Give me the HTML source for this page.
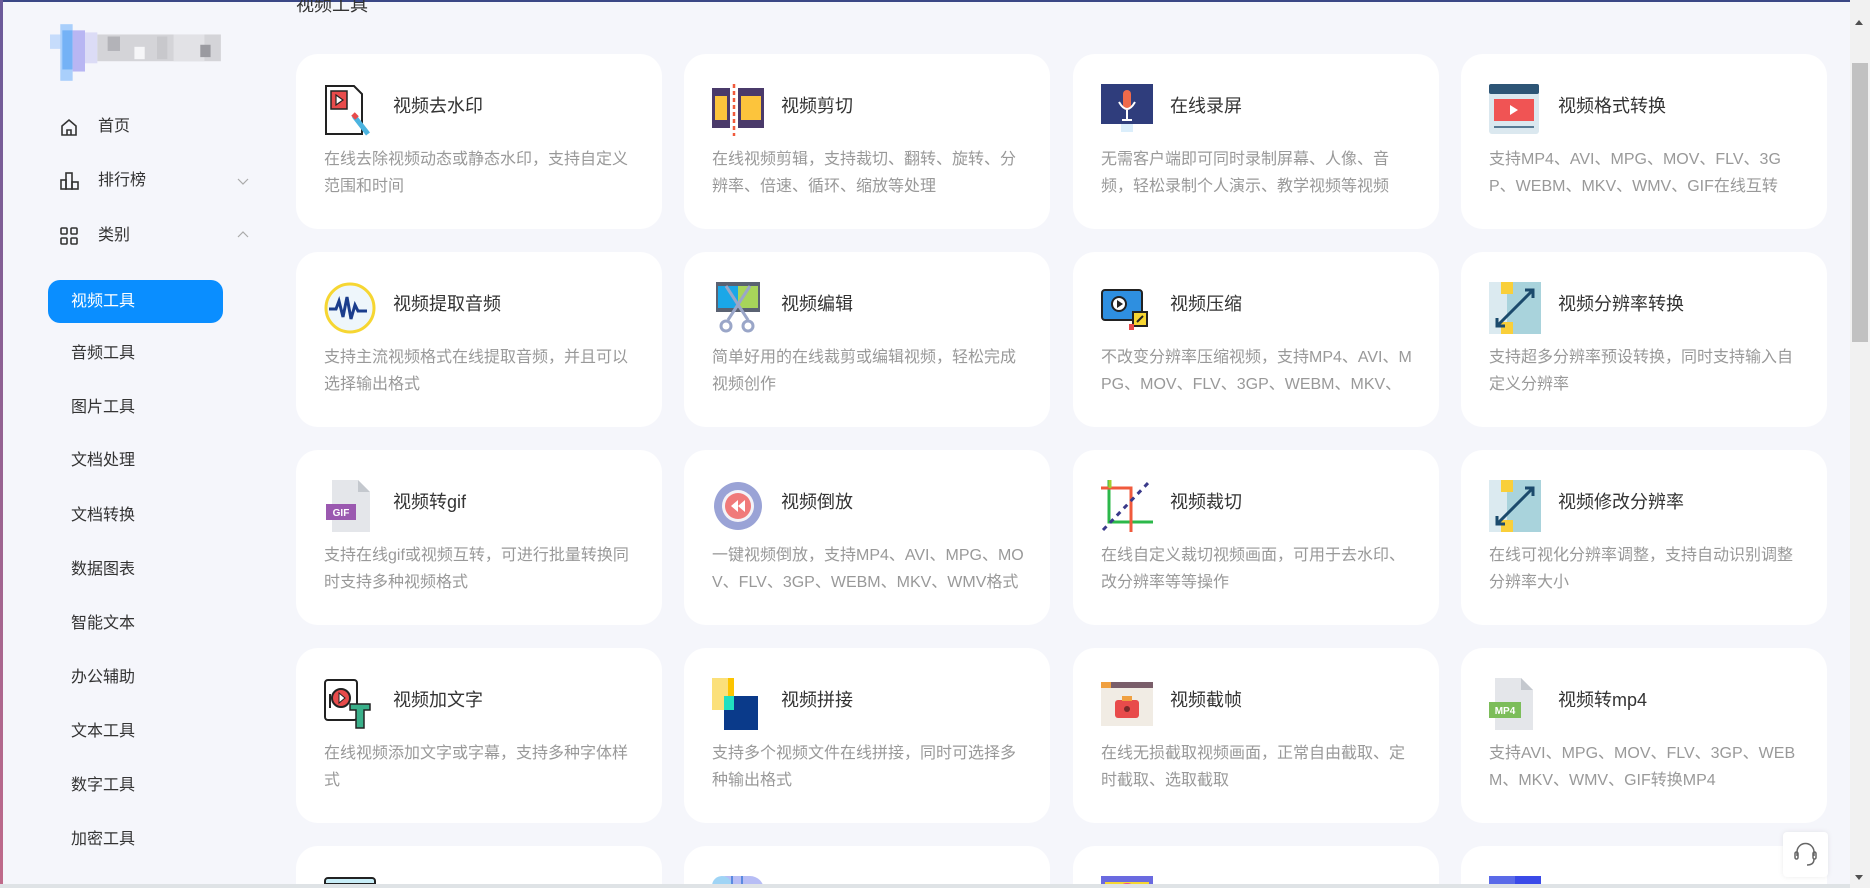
<!DOCTYPE html>
<html><head><meta charset="utf-8"><style>
*{margin:0;padding:0;box-sizing:border-box}
html,body{width:1870px;height:888px;overflow:hidden}
body{background:#f5f6fb;font-family:"Liberation Sans","Noto Sans CJK SC",sans-serif}
#wrap{position:relative;width:1870px;height:888px;overflow:hidden;background:#f5f6fb}
.topb{position:absolute;left:0;top:0;width:1870px;height:2px;background:#3b4886}
.leftb{position:absolute;left:0;top:0;width:3px;height:888px;background:linear-gradient(#6a5a9a,#c06a8a)}
.logo{position:absolute;left:50px;top:22px;width:175px;height:62px}
.nav{position:absolute;left:98px;font-size:16px;color:#333;line-height:20px}
.sub{position:absolute;left:71px;font-size:16px;color:#333;line-height:20px}
.ico{position:absolute;left:60px}
.chev{position:absolute;left:237px;width:12px;height:12px}
.pill{position:absolute;left:48px;top:280px;width:175px;height:43px;background:#0a8eff;border-radius:12px;color:#fff;font-size:16px;line-height:43px;padding-left:23px}
h2{position:absolute;left:296px;top:0;height:16px;overflow:hidden;font-size:18px;font-weight:normal;color:#333;line-height:10px}
.card{position:absolute;width:366px;height:175px;background:#fff;border-radius:22px;overflow:hidden}
.card.last{height:42px;border-radius:22px 22px 0 0}
.card svg{position:absolute;left:28px;top:30px;width:52px;height:52px}
.card .t{position:absolute;left:97px;top:40px;font-size:18px;color:#333;line-height:24px;white-space:nowrap}
.card .d{position:absolute;left:28px;top:92px;width:312px;font-size:16px;color:#999;line-height:27px;word-break:break-all}
.sb{position:absolute;left:1850px;top:0;width:20px;height:888px;background:#f1f1f1}
.thumb{position:absolute;left:1852px;top:63px;width:16px;height:279px;background:#c1c1c1}
.help{position:absolute;left:1783px;top:832px;width:45px;height:45px;background:#fff;border-radius:4px;box-shadow:0 0 6px rgba(0,0,0,.08)}
.hbar{position:absolute;left:0;top:884px;width:1850px;height:4px;background:#dfe3e6}
</style></head><body><div id="wrap">
<div class="topb"></div><div class="leftb"></div>
<svg class="logo" viewBox="0 0 170 60">
<rect x="0" y="12" width="12" height="14" fill="#c6dcfb"/><rect x="10" y="2" width="12" height="55" fill="#a9cffb"/><rect x="12" y="8" width="10" height="38" fill="#74b2f6"/><rect x="22" y="8" width="12" height="40" fill="#b8b6f3"/><rect x="34" y="10" width="12" height="30" fill="#dcdcf6"/>
<rect x="46" y="12" width="120" height="26" fill="#d4d4d8"/><rect x="56" y="14" width="12" height="14" fill="#b3b3b8"/><rect x="82" y="24" width="10" height="12" fill="#f6f6f8"/><rect x="104" y="14" width="10" height="22" fill="#c8c8cc"/><rect x="120" y="12" width="30" height="26" fill="#e2e2e6"/><rect x="146" y="22" width="10" height="12" fill="#9a9aa0"/>
</svg>
<svg class="ico" style="top:118px" width="18" height="18" viewBox="0 0 18 18" fill="none" stroke="#333" stroke-width="1.6"><path d="M2 8L9 2l7 6v9H2z"/><path d="M7 17v-5h4v5"/></svg>
<div class="nav" style="top:117px">首页</div>
<svg class="ico" style="top:172px" width="20" height="18" viewBox="0 0 20 18" fill="none" stroke="#333" stroke-width="1.6"><rect x="1" y="8" width="5" height="9"/><rect x="6" y="1" width="6" height="16"/><rect x="12" y="10" width="6" height="7"/></svg>
<div class="nav" style="top:171px">排行榜</div>
<svg class="chev" style="top:175px" viewBox="0 0 12 12" fill="none" stroke="#aaa" stroke-width="1.2"><path d="M1 4l5 5 5-5"/></svg>
<svg class="ico" style="top:227px" width="18" height="18" viewBox="0 0 18 18" fill="none" stroke="#333" stroke-width="1.6"><rect x="1" y="1" width="6" height="6" rx="1"/><rect x="11" y="1" width="6" height="6" rx="1"/><rect x="1" y="11" width="6" height="6" rx="1"/><rect x="11" y="11" width="6" height="6" rx="1"/></svg>
<div class="nav" style="top:226px">类别</div>
<svg class="chev" style="top:229px" viewBox="0 0 12 12" fill="none" stroke="#aaa" stroke-width="1.2"><path d="M1 8l5-5 5 5"/></svg>
<div class="pill">视频工具</div>
<div class="sub" style="top:344px">音频工具</div>
<div class="sub" style="top:398px">图片工具</div>
<div class="sub" style="top:451px">文档处理</div>
<div class="sub" style="top:506px">文档转换</div>
<div class="sub" style="top:560px">数据图表</div>
<div class="sub" style="top:614px">智能文本</div>
<div class="sub" style="top:668px">办公辅助</div>
<div class="sub" style="top:722px">文本工具</div>
<div class="sub" style="top:776px">数字工具</div>
<div class="sub" style="top:830px">加密工具</div>

<h2>视频工具</h2>

<div class="card" style="left:296px;top:54px"><svg viewBox="0 0 52 52"><path d="M2 2h28l8 8v40H2z" fill="#fff" stroke="#222" stroke-width="2"/><rect x="7" y="7" width="16" height="18" fill="#e84b4b" stroke="#222" stroke-width="1.5"/><path d="M12 11l7 5-7 5z" fill="#fff" stroke="#222" stroke-width="1.2"/><path d="M30 32l14 18" stroke="#4bb4e0" stroke-width="5"/><path d="M29 30l4 4" stroke="#e84b4b" stroke-width="5"/></svg><div class="t">视频去水印</div><div class="d">在线去除视频动态或静态水印，支持自定义范围和时间</div></div>
<div class="card" style="left:684px;top:54px"><svg viewBox="0 0 52 52"><rect x="0" y="4" width="18" height="40" fill="#4a3a6a"/><rect x="3" y="12" width="12" height="24" fill="#fcc43c"/><rect x="26" y="4" width="26" height="40" fill="#4a3a6a"/><rect x="29" y="12" width="20" height="24" fill="#fcc43c"/><path d="M22 0v52" stroke="#f05a3c" stroke-width="2.5" stroke-dasharray="4 3"/></svg><div class="t">视频剪切</div><div class="d">在线视频剪辑，支持裁切、翻转、旋转、分辨率、倍速、循环、缩放等处理</div></div>
<div class="card" style="left:1073px;top:54px"><svg viewBox="0 0 52 52"><rect x="0" y="0" width="52" height="40" fill="#2f3d7c"/><rect x="22" y="6" width="8" height="20" rx="4" fill="#f06a4a"/><path d="M18 18q8 14 16 0M26 26v10M21 36h10" stroke="#fff" stroke-width="2" fill="none"/><rect x="20" y="40" width="12" height="8" fill="#dbeefb"/></svg><div class="t">在线录屏</div><div class="d">无需客户端即可同时录制屏幕、人像、音频，轻松录制个人演示、教学视频等视频</div></div>
<div class="card" style="left:1461px;top:54px"><svg viewBox="0 0 52 52"><rect x="0" y="0" width="50" height="50" rx="3" fill="#dbe8ef"/><rect x="0" y="0" width="50" height="10" rx="2" fill="#2d5576"/><rect x="5" y="15" width="40" height="22" fill="#f05454"/><path d="M21 21l8 5-8 5z" fill="#fff"/><path d="M5 43h40" stroke="#2d5576" stroke-width="1.5"/></svg><div class="t">视频格式转换</div><div class="d">支持MP4、AVI、MPG、MOV、FLV、3GP、WEBM、MKV、WMV、GIF在线互转</div></div>

<div class="card" style="left:296px;top:252px"><svg viewBox="0 0 52 52"><circle cx="26" cy="26" r="24" fill="#eef6fb" stroke="#f6d632" stroke-width="3"/><path d="M5 27h7l3-8 4 16 4-20 4 22 4-14 3 6h9" stroke="#1b3d8c" stroke-width="3" fill="none"/></svg><div class="t">视频提取音频</div><div class="d">支持主流视频格式在线提取音频，并且可以选择输出格式</div></div>
<div class="card" style="left:684px;top:252px"><svg viewBox="0 0 52 52"><rect x="4" y="0" width="44" height="30" fill="#5a6272"/><rect x="6" y="4" width="20" height="22" fill="#1aa7e8"/><rect x="26" y="4" width="20" height="22" fill="#a7d45a"/><path d="M14 4l22 34M38 4L16 38" stroke="#9aa6c8" stroke-width="3"/><circle cx="14" cy="44" r="5" fill="none" stroke="#9aa6c8" stroke-width="3"/><circle cx="36" cy="44" r="5" fill="none" stroke="#9aa6c8" stroke-width="3"/></svg><div class="t">视频编辑</div><div class="d">简单好用的在线裁剪或编辑视频，轻松完成视频创作</div></div>
<div class="card" style="left:1073px;top:252px"><svg viewBox="0 0 52 52"><rect x="1" y="8" width="40" height="30" rx="3" fill="#2e8fe0" stroke="#222" stroke-width="2"/><circle cx="18" cy="22" r="7" fill="#fff" stroke="#222" stroke-width="2"/><path d="M16 18l6 4-6 4z" fill="#222"/><rect x="32" y="30" width="14" height="14" fill="#f6d632" stroke="#222" stroke-width="2"/><path d="M36 40l6-6" stroke="#222" stroke-width="2"/><rect x="28" y="42" width="5" height="6" fill="#e84b4b"/></svg><div class="t">视频压缩</div><div class="d">不改变分辨率压缩视频，支持MP4、AVI、MPG、MOV、FLV、3GP、WEBM、MKV、</div></div>
<div class="card" style="left:1461px;top:252px"><svg viewBox="0 0 52 52"><rect x="0" y="0" width="52" height="52" fill="#a9d3dc"/><rect x="0" y="0" width="18" height="52" fill="#dbeaf0"/><rect x="12" y="0" width="12" height="12" fill="#f9cf3a"/><rect x="12" y="40" width="12" height="12" fill="#f9cf3a"/><path d="M8 44L44 8M36 8h8v8M8 36v8h8" stroke="#1b4a6c" stroke-width="3" fill="none"/></svg><div class="t">视频分辨率转换</div><div class="d">支持超多分辨率预设转换，同时支持输入自定义分辨率</div></div>

<div class="card" style="left:296px;top:450px"><svg viewBox="0 0 52 52"><path d="M8 0h26l12 12v40H8z" fill="#e4e6ea"/><path d="M34 0v12h12z" fill="#c4c8ce"/><rect x="2" y="24" width="30" height="16" fill="#9b59b0"/><text x="17" y="36" font-size="10" font-weight="bold" fill="#fff" text-anchor="middle" font-family="Liberation Sans">GIF</text></svg><div class="t">视频转gif</div><div class="d">支持在线gif或视频互转，可进行批量转换同时支持多种视频格式</div></div>
<div class="card" style="left:684px;top:450px"><svg viewBox="0 0 52 52"><circle cx="26" cy="26" r="24" fill="#9aa3d6"/><circle cx="26" cy="26" r="16" fill="#f3f3f8"/><circle cx="26" cy="26" r="13" fill="#f07a7a"/><path d="M26 20l-7 6 7 6zM33 20l-7 6 7 6z" fill="#fff"/></svg><div class="t">视频倒放</div><div class="d">一键视频倒放，支持MP4、AVI、MPG、MOV、FLV、3GP、WEBM、MKV、WMV格式</div></div>
<div class="card" style="left:1073px;top:450px"><svg viewBox="0 0 52 52"><path d="M8 0v42h44" stroke="#2cb84a" stroke-width="3" fill="none"/><path d="M0 8h30v44" stroke="#f05a3c" stroke-width="3" fill="none"/><path d="M9 0v8" stroke="#a0d030" stroke-width="3"/><path d="M2 50L48 2" stroke="#3a3a8a" stroke-width="3" stroke-dasharray="5 5"/></svg><div class="t">视频裁切</div><div class="d">在线自定义裁切视频画面，可用于去水印、改分辨率等等操作</div></div>
<div class="card" style="left:1461px;top:450px"><svg viewBox="0 0 52 52"><rect x="0" y="0" width="52" height="52" fill="#a9d3dc"/><rect x="0" y="0" width="18" height="52" fill="#dbeaf0"/><rect x="12" y="0" width="12" height="12" fill="#f9cf3a"/><rect x="12" y="40" width="12" height="12" fill="#f9cf3a"/><path d="M8 44L44 8M36 8h8v8M8 36v8h8" stroke="#1b4a6c" stroke-width="3" fill="none"/></svg><div class="t">视频修改分辨率</div><div class="d">在线可视化分辨率调整，支持自动识别调整分辨率大小</div></div>

<div class="card" style="left:296px;top:648px"><svg viewBox="0 0 52 52"><rect x="1" y="2" width="32" height="40" rx="3" fill="#fff" stroke="#222" stroke-width="2"/><circle cx="17" cy="20" r="9" fill="#e84b4b" stroke="#222" stroke-width="2"/><path d="M15 15l6 5-6 5z" fill="#fff" stroke="#222"/><path d="M26 26h20v6h-6v18h-8V32h-6z" fill="#3ab08a" stroke="#222" stroke-width="1.5"/><path d="M6 16v14" stroke="#222" stroke-width="2"/></svg><div class="t">视频加文字</div><div class="d">在线视频添加文字或字幕，支持多种字体样式</div></div>
<div class="card" style="left:684px;top:648px"><svg viewBox="0 0 52 52"><rect x="0" y="0" width="22" height="32" fill="#fbe07a"/><rect x="16" y="0" width="6" height="32" fill="#fcc400"/><rect x="12" y="18" width="34" height="34" fill="#0a3a8a"/><rect x="12" y="18" width="10" height="14" fill="#20e0c0"/></svg><div class="t">视频拼接</div><div class="d">支持多个视频文件在线拼接，同时可选择多种输出格式</div></div>
<div class="card" style="left:1073px;top:648px"><svg viewBox="0 0 52 52"><rect x="0" y="4" width="52" height="44" fill="#f1ece4"/><rect x="0" y="4" width="52" height="6" fill="#7a5e6a"/><rect x="0" y="4" width="10" height="6" fill="#f0a040"/><rect x="14" y="22" width="24" height="18" rx="3" fill="#e84b4b"/><rect x="21" y="18" width="10" height="5" fill="#f0a040"/><circle cx="26" cy="31" r="3" fill="#7a2a2a"/></svg><div class="t">视频截帧</div><div class="d">在线无损截取视频画面，正常自由截取、定时截取、选取截取</div></div>
<div class="card" style="left:1461px;top:648px"><svg viewBox="0 0 52 52"><path d="M6 0h26l12 12v40H6z" fill="#e4e6ea"/><path d="M32 0v12h12z" fill="#c4c8ce"/><rect x="0" y="24" width="32" height="16" fill="#7cbd5a"/><text x="16" y="36" font-size="10" font-weight="bold" fill="#fff" text-anchor="middle" font-family="Liberation Sans">MP4</text></svg><div class="t">视频转mp4</div><div class="d">支持AVI、MPG、MOV、FLV、3GP、WEBM、MKV、WMV、GIF转换MP4</div></div>

<div class="card last" style="left:296px;top:846px"><svg viewBox="0 0 52 52"><rect x="1" y="2" width="50" height="40" rx="3" fill="#c8eef8" stroke="#222" stroke-width="2"/><path d="M1 8h50" stroke="#222" stroke-width="2"/></svg></div>
<div class="card last" style="left:684px;top:846px"><svg viewBox="0 0 52 52"><rect x="0" y="0" width="52" height="52" rx="14" fill="#b7bdf5"/><rect x="0" y="0" width="20" height="52" rx="10" fill="#9fd4f5"/><path d="M20 0v52M30 0v52" stroke="#5a8ae0" stroke-width="2"/></svg></div>
<div class="card last" style="left:1073px;top:846px"><svg viewBox="0 0 52 52"><rect x="0" y="0" width="52" height="52" fill="#6a6ae0"/><rect x="4" y="6" width="44" height="40" fill="#f6d632"/><circle cx="26" cy="16" r="9" fill="#f0508a"/></svg></div>
<div class="card last" style="left:1461px;top:846px"><svg viewBox="0 0 52 52"><rect x="0" y="0" width="52" height="52" fill="#3a4ae8"/><rect x="0" y="0" width="26" height="52" fill="#5a6ae8"/><rect x="6" y="8" width="6" height="6" fill="#30d0f0"/><rect x="36" y="8" width="6" height="6" fill="#30d0f0"/></svg></div>

<div class="help"><svg width="45" height="45" viewBox="0 0 45 45" fill="none" stroke="#666" stroke-width="1.5"><path d="M14 24v-4a8.5 8.5 0 0117 0v4"/><rect x="12" y="20" width="3" height="7" rx="1.5"/><rect x="30" y="20" width="3" height="7" rx="1.5"/><path d="M31 27q0 6-7 6"/></svg></div>
<div class="hbar"></div>
<div class="sb"></div><div class="thumb"></div>
<svg style="position:absolute;left:1854px;top:18px" width="10" height="8"><path d="M1 7L5 2l4 5z" fill="#505050"/></svg>
<svg style="position:absolute;left:1854px;top:874px" width="10" height="8"><path d="M1 1h8L5 6z" fill="#505050"/></svg>
</div></body></html>
